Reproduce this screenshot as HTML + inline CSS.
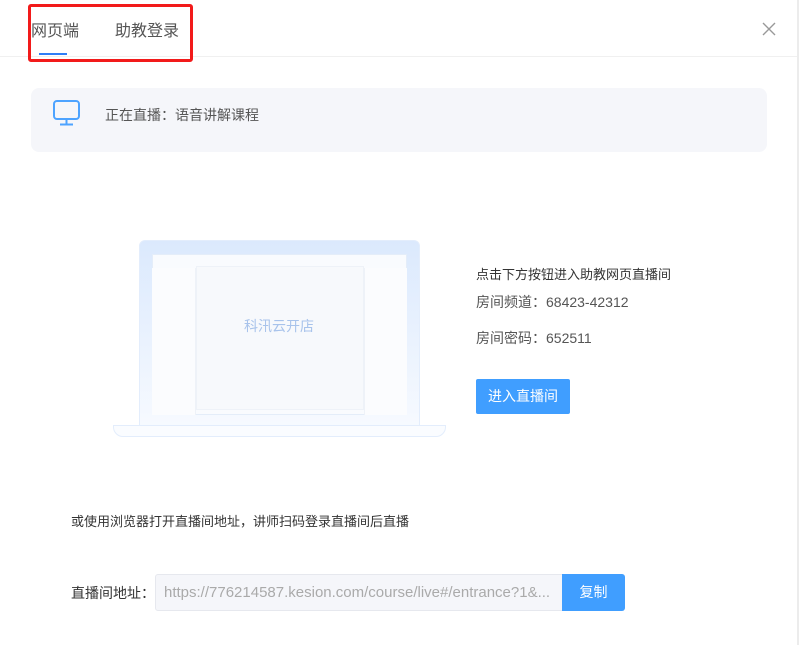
<!DOCTYPE html>
<html><head><meta charset="utf-8"><style>
*{margin:0;padding:0;box-sizing:border-box}
body{width:799px;height:645px;background:#fff;font-family:"Liberation Sans","Noto Sans CJK SC",sans-serif;position:relative;overflow:hidden;color:#333}
.a{position:absolute}
</style></head><body>
<div class="a" style="left:0;top:56px;width:799px;height:1px;background:#f0f0f0"></div>
<div class="a" style="left:28px;top:4px;width:165px;height:58px;border:3px solid #f21a1a;border-radius:3px"></div>
<div class="a" style="left:31px;top:17px;font-size:16px;color:#555">网页端</div>
<div class="a" style="left:115px;top:17px;font-size:16px;color:#555">助教登录</div>
<div class="a" style="left:39px;top:53px;width:28px;height:2px;background:#2f7df6"></div>
<svg class="a" style="left:762px;top:22px" width="14" height="14"><path d="M1 1L13 13M13 1L1 13" stroke="#999" stroke-width="1.4"/></svg>
<div class="a" style="left:31px;top:88px;width:736px;height:64px;background:#f5f6fa;border-radius:8px"></div>
<svg class="a" style="left:53px;top:100px" width="27" height="26"><rect x="1" y="1" width="25" height="18" rx="3" fill="none" stroke="#4da3ff" stroke-width="2"/><path d="M13.5 19V24M7 24.5H20" stroke="#4da3ff" stroke-width="2"/></svg>
<div class="a" style="left:105px;top:105px;font-size:14px;color:#555">正在直播：语音讲解课程</div>
<div class="a" style="left:139px;top:240px;width:281px;height:190px;border-radius:6px 6px 0 0;background:linear-gradient(#dbe9fd,#f7faff);border:1px solid #e3edfc"></div>
<div class="a" style="left:152px;top:254px;width:255px;height:161px;background:#f9fbfe;border:1px solid #e4edf9"></div>
<div class="a" style="left:196px;top:266px;width:168px;height:144px;background:#f7f9fc;border:1px solid #eef2f8"></div>
<div class="a" style="left:152px;top:268px;width:44px;height:147px;background:#fbfcfe;border-right:1px solid #eef2f8"></div>
<div class="a" style="left:364px;top:268px;width:43px;height:147px;background:#fbfcfe;border-left:1px solid #eef2f8"></div>
<div class="a" style="left:244px;top:316px;font-size:14px;color:#a8c3eb">科汛云开店</div>
<div class="a" style="left:113px;top:425px;width:333px;height:12px;border:1px solid #e3edfc;border-radius:0 0 10px 10px;background:#fafcff"></div>
<div class="a" style="left:476px;top:264px;font-size:13px;color:#333">点击下方按钮进入助教网页直播间</div>
<div class="a" style="left:476px;top:292px;font-size:14px;color:#555">房间频道：68423-42312</div>
<div class="a" style="left:476px;top:328px;font-size:14px;color:#555">房间密码：652511</div>
<div class="a" style="left:476px;top:379px;width:94px;height:35px;background:#409eff;border-radius:2px;color:#fff;font-size:14px;line-height:35px;text-align:center">进入直播间</div>
<div class="a" style="left:71px;top:511px;font-size:13px;color:#333">或使用浏览器打开直播间地址，讲师扫码登录直播间后直播</div>
<div class="a" style="left:71px;top:583px;font-size:14px;color:#333">直播间地址：</div>
<div class="a" style="left:155px;top:574px;width:408px;height:37px;background:#f5f6fa;border:1px solid #e6e8ee;border-radius:3px 0 0 3px;font-size:15px;line-height:35px;padding-left:8px;color:#aaa;white-space:nowrap;overflow:hidden">https://776214587.kesion.com/course/live#/entrance?1&amp;...</div>
<div class="a" style="left:562px;top:574px;width:63px;height:37px;background:#409eff;border-radius:0 3px 3px 0;color:#fff;font-size:14px;line-height:37px;text-align:center">复制</div>
<div class="a" style="left:797px;top:0;width:2px;height:645px;background:#ececec"></div>
</body></html>
